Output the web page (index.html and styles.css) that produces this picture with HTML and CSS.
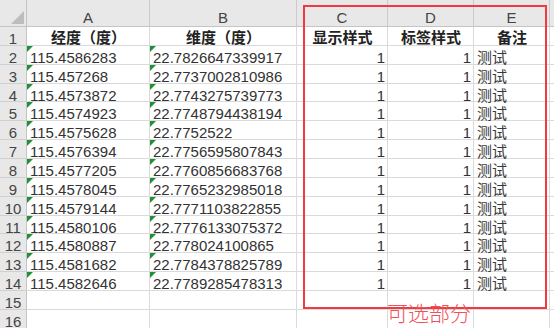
FILE: index.html
```html
<!DOCTYPE html>
<html>
<head>
<meta charset="utf-8">
<link rel="stylesheet" href="styles.css">
</head>
<body>
<div class="sheet">
  <div class="grid">
    <div class="corner"><span class="corner-tri"></span></div>
    <div class="ch">A</div><div class="ch">B</div><div class="ch">C</div><div class="ch">D</div><div class="ch">E</div><div class="ch ch-f"></div>

    <div class="rh">1</div><div class="c hd">经度（度）</div><div class="c hd">维度（度）</div><div class="c hd">显示样式</div><div class="c hd">标签样式</div><div class="c hd">备注</div><div class="c"></div>

    <div class="rh">2</div><div class="c tx">115.4586283</div><div class="c tx">22.7826647339917</div><div class="c num">1</div><div class="c num">1</div><div class="c cn">测试</div><div class="c"></div>
    <div class="rh">3</div><div class="c tx">115.457268</div><div class="c tx">22.7737002810986</div><div class="c num">1</div><div class="c num">1</div><div class="c cn">测试</div><div class="c"></div>
    <div class="rh">4</div><div class="c tx">115.4573872</div><div class="c tx">22.7743275739773</div><div class="c num">1</div><div class="c num">1</div><div class="c cn">测试</div><div class="c"></div>
    <div class="rh">5</div><div class="c tx">115.4574923</div><div class="c tx">22.7748794438194</div><div class="c num">1</div><div class="c num">1</div><div class="c cn">测试</div><div class="c"></div>
    <div class="rh">6</div><div class="c tx">115.4575628</div><div class="c tx">22.7752522</div><div class="c num">1</div><div class="c num">1</div><div class="c cn">测试</div><div class="c"></div>
    <div class="rh">7</div><div class="c tx">115.4576394</div><div class="c tx">22.7756595807843</div><div class="c num">1</div><div class="c num">1</div><div class="c cn">测试</div><div class="c"></div>
    <div class="rh">8</div><div class="c tx">115.4577205</div><div class="c tx">22.7760856683768</div><div class="c num">1</div><div class="c num">1</div><div class="c cn">测试</div><div class="c"></div>
    <div class="rh">9</div><div class="c tx">115.4578045</div><div class="c tx">22.7765232985018</div><div class="c num">1</div><div class="c num">1</div><div class="c cn">测试</div><div class="c"></div>
    <div class="rh">10</div><div class="c tx">115.4579144</div><div class="c tx">22.7771103822855</div><div class="c num">1</div><div class="c num">1</div><div class="c cn">测试</div><div class="c"></div>
    <div class="rh">11</div><div class="c tx">115.4580106</div><div class="c tx">22.7776133075372</div><div class="c num">1</div><div class="c num">1</div><div class="c cn">测试</div><div class="c"></div>
    <div class="rh">12</div><div class="c tx">115.4580887</div><div class="c tx">22.778024100865</div><div class="c num">1</div><div class="c num">1</div><div class="c cn">测试</div><div class="c"></div>
    <div class="rh">13</div><div class="c tx">115.4581682</div><div class="c tx">22.7784378825789</div><div class="c num">1</div><div class="c num">1</div><div class="c cn">测试</div><div class="c"></div>
    <div class="rh">14</div><div class="c tx">115.4582646</div><div class="c tx">22.7789285478313</div><div class="c num">1</div><div class="c num">1</div><div class="c cn">测试</div><div class="c"></div>
    <div class="rh">15</div><div class="c"></div><div class="c"></div><div class="c"></div><div class="c"></div><div class="c"></div><div class="c"></div>
    <div class="rh">16</div><div class="c"></div><div class="c"></div><div class="c"></div><div class="c"></div><div class="c"></div><div class="c"></div>
  </div>
  <div class="sel-box"></div>
  <div class="sel-label">可选部分</div>
</div>
</body>
</html>
```

FILE: styles.css
```css
html, body {
  margin: 0;
  padding: 0;
  background: #ffffff;
  overflow: hidden;
}

.sheet {
  position: relative;
  width: 554px;
  height: 328px;
  overflow: hidden;
  font-family: "Liberation Sans", "Noto Sans CJK SC", sans-serif;
  font-size: 15px;
  color: #333333;
}

.grid {
  display: grid;
  grid-template-columns: 27px 123px 147px 91px 86px 76px 40px;
  grid-template-rows: 27px repeat(16, 18.86px);
}

.grid > div {
  box-sizing: border-box;
  border-right: 1px solid #dadada;
  border-bottom: 1px solid #dadada;
  white-space: nowrap;
}

.corner {
  position: relative;
  background: #e8e8e8;
  border-right-color: #c4c4c4 !important;
  border-bottom-color: #c4c4c4 !important;
}

.corner-tri {
  position: absolute;
  right: 2px;
  bottom: 2px;
  width: 13px;
  height: 13px;
  background: #bdbdbd;
  clip-path: polygon(100% 0, 100% 100%, 0 100%);
}

.ch {
  background: #e8e8e8;
  color: #444444;
  text-align: center;
  line-height: 16px;
  padding-top: 10px;
  border-right-color: #cbcbcb !important;
  border-bottom-color: #c4c4c4 !important;
}

.rh {
  background: #e8e8e8;
  color: #444444;
  text-align: center;
  line-height: 17px;
  padding-top: 3px;
  border-right-color: #c4c4c4 !important;
  border-bottom-color: #d0d0d0 !important;
}

.c {
  position: relative;
  line-height: 17px;
  padding: 3px 2px 0 3px;
  color: #333333;
}

.hd {
  font-weight: bold;
  text-align: center;
  color: #222222;
  padding-top: 2px;
}

.num {
  text-align: right;
}

.cn {
  color: #383838;
}

.tx::before {
  content: "";
  position: absolute;
  left: 0;
  top: 0;
  width: 0;
  height: 0;
  border-top: 6px solid #1f8f3a;
  border-right: 6px solid transparent;
}

.sel-box {
  position: absolute;
  left: 303px;
  top: 5px;
  width: 244px;
  height: 304px;
  box-sizing: border-box;
  border: 2px solid #f03a3f;
}

.sel-label {
  position: absolute;
  left: 387px;
  top: 298px;
  font-family: "Noto Sans CJK SC", sans-serif;
  font-size: 21px;
  line-height: 28px;
  font-weight: 300;
  color: #f05058;
}
```
